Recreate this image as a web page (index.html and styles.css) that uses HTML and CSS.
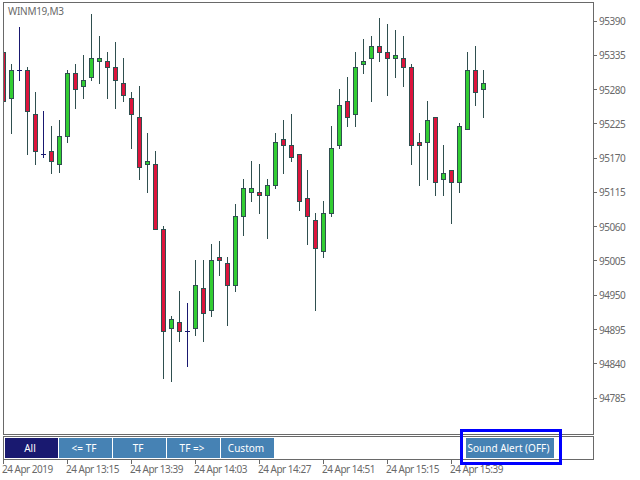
FILE: index.html
```html
<!DOCTYPE html>
<html lang="en">
<head>
<meta charset="utf-8">
<title>WINM19,M3</title>
<link rel="stylesheet" href="styles.css">
</head>
<body>
<div class="terminal">
  <div class="main-row">
    <div class="chart">
      <span class="symbol">WINM19,M3</span>
      <svg class="candles" viewBox="4 3 589 431" width="589" height="431" aria-hidden="true">
        <path class="wick" d="M11.5 64V134M27.5 67V155M35.5 92V165M51.5 126V174M59.5 120V173M67.5 70V143M75.5 64V109M83.5 55V99M91.5 14V81M99.5 36V84M107.5 52V99M115.5 42V109M123.5 58V102M131.5 92V149M139.5 86V180M147.5 133V193M155.5 151V230M163.5 226V379M171.5 316V382M179.5 291V342M195.5 260V336M203.5 260V342M211.5 244V317M219.5 241V276M227.5 257V326M235.5 204V292M243.5 179V236M251.5 161V202M259.5 164V214M267.5 179V239M275.5 133V189M283.5 120V174M291.5 114V162M299.5 154V211M307.5 170V245M315.5 213V311M323.5 201V258M331.5 126V217M339.5 89V149M347.5 77V127M355.5 52V127M363.5 39V74M371.5 36V102M379.5 18V62M387.5 24V96M395.5 30V78M403.5 36V87M411.5 64V165M419.5 133V186M427.5 101V180M435.5 117V196M443.5 145V196M451.5 170V224M459.5 123V193M467.5 52V130M475.5 46V106M483.5 70V118"/>
        <path class="doji" d="M19.5 27V81M17 70.5H22M43.5 111V158M41 154.5H46M187.5 303V367M185 331.5H190"/>
        <g class="bear">
          <rect x="1.5" y="52.5" width="4" height="49"/>
          <rect x="25.5" y="70.5" width="4" height="41"/>
          <rect x="33.5" y="114.5" width="4" height="37"/>
          <rect x="49.5" y="151.5" width="4" height="10"/>
          <rect x="73.5" y="73.5" width="4" height="16"/>
          <rect x="105.5" y="61.5" width="4" height="6"/>
          <rect x="113.5" y="67.5" width="4" height="13"/>
          <rect x="121.5" y="83.5" width="4" height="12"/>
          <rect x="129.5" y="98.5" width="4" height="16"/>
          <rect x="137.5" y="117.5" width="4" height="50"/>
          <rect x="153.5" y="164.5" width="4" height="65"/>
          <rect x="161.5" y="229.5" width="4" height="102"/>
          <rect x="177.5" y="322.5" width="4" height="9"/>
          <rect x="201.5" y="288.5" width="4" height="25"/>
          <rect x="217.5" y="257.5" width="4" height="3"/>
          <rect x="225.5" y="263.5" width="4" height="22"/>
          <rect x="257.5" y="192.5" width="4" height="3"/>
          <rect x="281.5" y="139.5" width="4" height="6"/>
          <rect x="289.5" y="145.5" width="4" height="12"/>
          <rect x="297.5" y="154.5" width="4" height="47"/>
          <rect x="305.5" y="198.5" width="4" height="18"/>
          <rect x="313.5" y="220.5" width="4" height="28"/>
          <rect x="345.5" y="101.5" width="4" height="16"/>
          <rect x="377.5" y="46.5" width="4" height="6"/>
          <rect x="385.5" y="52.5" width="4" height="6"/>
          <rect x="401.5" y="58.5" width="4" height="9"/>
          <rect x="409.5" y="67.5" width="4" height="78"/>
          <rect x="417.5" y="142.5" width="4" height="3"/>
          <rect x="433.5" y="117.5" width="4" height="65"/>
          <rect x="449.5" y="170.5" width="4" height="12"/>
          <rect x="473.5" y="70.5" width="4" height="22"/>
        </g>
        <g class="bull">
          <rect x="9.5" y="70.5" width="4" height="28"/>
          <rect x="57.5" y="136.5" width="4" height="28"/>
          <rect x="65.5" y="73.5" width="4" height="63"/>
          <rect x="81.5" y="80.5" width="4" height="6"/>
          <rect x="89.5" y="58.5" width="4" height="19"/>
          <rect x="97.5" y="58.5" width="4" height="3"/>
          <rect x="145.5" y="161.5" width="4" height="3"/>
          <rect x="169.5" y="319.5" width="4" height="9"/>
          <rect x="193.5" y="285.5" width="4" height="43"/>
          <rect x="209.5" y="260.5" width="4" height="50"/>
          <rect x="233.5" y="216.5" width="4" height="69"/>
          <rect x="241.5" y="188.5" width="4" height="28"/>
          <rect x="249.5" y="188.5" width="4" height="4"/>
          <rect x="265.5" y="185.5" width="4" height="10"/>
          <rect x="273.5" y="142.5" width="4" height="43"/>
          <rect x="321.5" y="213.5" width="4" height="38"/>
          <rect x="329.5" y="148.5" width="4" height="65"/>
          <rect x="337.5" y="105.5" width="4" height="40"/>
          <rect x="353.5" y="67.5" width="4" height="47"/>
          <rect x="361.5" y="61.5" width="4" height="3"/>
          <rect x="369.5" y="46.5" width="4" height="12"/>
          <rect x="393.5" y="55.5" width="4" height="3"/>
          <rect x="425.5" y="120.5" width="4" height="22"/>
          <rect x="441.5" y="173.5" width="4" height="6"/>
          <rect x="457.5" y="126.5" width="4" height="56"/>
          <rect x="465.5" y="70.5" width="4" height="59"/>
          <rect x="481.5" y="83.5" width="4" height="6"/>
        </g>
      </svg>
    </div>
    <div class="price-axis">
      <span class="price">95390</span>
      <span class="price">95335</span>
      <span class="price">95280</span>
      <span class="price">95225</span>
      <span class="price">95170</span>
      <span class="price">95115</span>
      <span class="price">95060</span>
      <span class="price">95005</span>
      <span class="price">94950</span>
      <span class="price">94895</span>
      <span class="price">94840</span>
      <span class="price">94785</span>
    </div>
  </div>
  <div class="panel">
    <button class="btn btn-active">All</button>
    <button class="btn">&lt;= TF</button>
    <button class="btn">TF</button>
    <button class="btn">TF =&gt;</button>
    <button class="btn">Custom</button>
    <button class="btn btn-sound">Sound Alert (OFF)</button>
  </div>
  <div class="time-axis">
    <span class="time">24 Apr 2019</span>
    <span class="time">24 Apr 13:15</span>
    <span class="time">24 Apr 13:39</span>
    <span class="time">24 Apr 14:03</span>
    <span class="time">24 Apr 14:27</span>
    <span class="time">24 Apr 14:51</span>
    <span class="time">24 Apr 15:15</span>
    <span class="time">24 Apr 15:39</span>
  </div>
</div>
</body>
</html>
```
FILE: styles.css
```css
* { box-sizing: border-box; }
html, body { margin: 0; padding: 0; background: #fff; }
body { width: 640px; height: 480px; overflow: hidden; }

.terminal {
  padding: 2px 0 0 3px;
  font-family: "Noto Sans", "Liberation Sans", sans-serif;
  font-size: 10px;
  color: #696969;
}

.main-row { display: flex; }

.chart {
  position: relative;
  width: 591px;
  height: 433px;
  border: 1px solid #696969;
}
.symbol {
  position: absolute;
  left: 4px;
  top: 1px;
  line-height: 14px;
  letter-spacing: -0.3px;
}
.candles { display: block; }
.wick { stroke: #2f4f4f; stroke-width: 1; fill: none; }
.doji { stroke: #191970; stroke-width: 1; fill: none; }
.bear rect { fill: #dc143c; stroke: #2f4f4f; stroke-width: 1; }
.bull rect { fill: #32cd32; stroke: #2f4f4f; stroke-width: 1; }

.price-axis {
  display: flex;
  flex-direction: column;
  padding-top: 2px;
}
.price {
  display: flex;
  align-items: center;
  gap: 2px;
  height: 34.27px;
  letter-spacing: -0.5px;
}
.price::before {
  content: "";
  width: 3px;
  height: 1px;
  background: #696969;
}

.panel {
  display: flex;
  gap: 1px;
  width: 591px;
  height: 24px;
  margin-top: 1px;
  padding: 1px;
  border: 1px solid #696969;
}
.btn {
  width: 53px;
  height: 20px;
  padding: 0 3px 0 0;
  border: 0;
  background: #4682b4;
  color: #fff;
  font: inherit;
  font-size: 10px;
}
.btn-active { background: #191970; }
.btn-sound {
  position: relative;
  width: 88px;
  margin-left: auto;
  margin-right: 38px;
}
.btn-sound::after {
  content: "";
  position: absolute;
  top: -9px;
  right: -8px;
  bottom: -7px;
  left: -6px;
  border: 3px solid #0000ff;
}

.time-axis { display: flex; }
.time {
  position: relative;
  width: 64px;
  padding-top: 2px;
  line-height: 14px;
  white-space: nowrap;
  text-indent: -1px;
  letter-spacing: -0.5px;
}
.time::before {
  content: "";
  position: absolute;
  top: 0;
  left: 0;
  width: 1px;
  height: 4px;
  background: #696969;
}
```
